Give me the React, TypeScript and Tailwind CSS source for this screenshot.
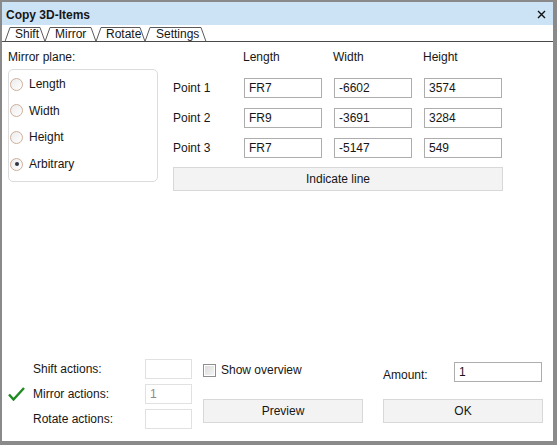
import React from 'react';

const TEXT = 'text-[12px] leading-[14px] text-[#161616]';

function Field({ value, width, muted }: { value: string; width: string; muted?: boolean }) {
  return (
    <div
      className={`${width} h-[20px] border flex items-center pl-[4px] ${
        muted ? 'border-[#e1e1e1] text-[#8a8a8a]' : 'border-[#adadad] text-[#161616]'
      }`}
    >
      {value}
    </div>
  );
}

function Radio({ label, checked }: { label: string; checked?: boolean }) {
  return (
    <div className="flex h-[14px] items-center gap-[6px]">
      <span className="flex h-[13px] w-[13px] items-center justify-center rounded-full border border-[#cfae98] bg-gradient-to-br from-[#ececec] to-white">
        {checked && <span className="h-[4px] w-[4px] rounded-full bg-[#2f3440]" />}
      </span>
      <span>{label}</span>
    </div>
  );
}

function Button({ label, width }: { label: string; width: string }) {
  return (
    <div
      className={`${width} flex h-[24px] items-center justify-center border border-[#d8d8d8] bg-[#f3f3f4]`}
    >
      {label}
    </div>
  );
}

function TabStrip() {
  const tabs = [
    { label: 'Shift', x: 13 },
    { label: 'Mirror', x: 53 },
    { label: 'Rotate', x: 104 },
    { label: 'Settings', x: 154 },
  ];
  return (
    <svg width="551" height="17" className="block">
      <path
        d="M3 16.5 L8 2.5 L38 2.5 L43 16.5 L48 2.5 L89 2.5 L94 16.5 L99 2.5 L138 2.5 L143 16.5 L148 2.5 L199 2.5 L204 16.5"
        fill="none"
        stroke="#5a5a5a"
        strokeWidth="1"
      />
      <line x1="0" y1="16.5" x2="551" y2="16.5" stroke="#4a4a4a" strokeWidth="1" />
      {tabs.map((t) => (
        <text
          key={t.label}
          x={t.x}
          y="13"
          fontSize="12"
          fontFamily="'Liberation Sans', Arial, sans-serif"
          fill="#161616"
        >
          {t.label}
        </text>
      ))}
    </svg>
  );
}

export default function App() {
  const points = [
    { name: 'Point 1', values: ['FR7', '-6602', '3574'] },
    { name: 'Point 2', values: ['FR9', '-3691', '3284'] },
    { name: 'Point 3', values: ['FR7', '-5147', '549'] },
  ];

  return (
    <div
      className={`flex h-[445px] w-[557px] flex-col border-t-2 border-l-2 border-r-4 border-b-4 border-[#8a8a8a] bg-white font-['Liberation_Sans',Arial,sans-serif] ${TEXT}`}
    >
      <div className="flex h-[23px] items-center justify-between bg-[#cce3f6] pl-[4px] pr-[7px] pt-[2px]">
        <span className="text-[12px] font-bold">Copy 3D-Items</span>
        <svg width="9" height="9" viewBox="0 0 9 9">
          <path d="M1 1 L8 8 M8 1 L1 8" stroke="#111" strokeWidth="1.4" />
        </svg>
      </div>

      <TabStrip />

      <div className="flex flex-1 flex-col px-[6px] pt-[8px] pb-[12px]">
        <div className="flex">
          <div className="flex w-[150px] flex-col">
            <div className="h-[14px]">Mirror plane:</div>
            <div className="mt-[5px] flex h-[113px] flex-col gap-[12.7px] rounded-[5px] border border-[#dcdcdc] pl-[1px] pt-[7px]">
              <Radio label="Length" />
              <Radio label="Width" />
              <Radio label="Height" />
              <Radio label="Arbitrary" checked />
            </div>
          </div>

          <div className="ml-[15px] flex flex-col">
            <div className="grid h-[14px] grid-cols-[58px_78px_78px_78px] gap-x-[12px]">
              <span />
              <span>Length</span>
              <span>Width</span>
              <span>Height</span>
            </div>
            <div className="mt-[14px] flex flex-col gap-[10px]">
              {points.map((p) => (
                <div
                  key={p.name}
                  className="grid grid-cols-[59px_78px_78px_78px] items-center gap-x-[12px]"
                >
                  <span>{p.name}</span>
                  {p.values.map((v, i) => (
                    <Field key={i} value={v} width="w-[78px]" />
                  ))}
                </div>
              ))}
            </div>
            <div className="mt-[9px]">
              <Button label="Indicate line" width="w-[330px]" />
            </div>
          </div>
        </div>

        <div className="mt-auto flex">
          <div className="grid grid-cols-[25px_112px_47px] grid-rows-[20px_20px_20px] items-center gap-y-[5px]">
            <span />
            <span>Shift actions:</span>
            <Field value="" width="w-[47px]" muted />
            <svg width="17" height="14" viewBox="0 0 17 14">
              <path d="M1 7.5 L5.5 12.5 L16 1" fill="none" stroke="#1d8a22" strokeWidth="2.4" />
            </svg>
            <span>Mirror actions:</span>
            <Field value="1" width="w-[47px]" muted />
            <span />
            <span>Rotate actions:</span>
            <Field value="" width="w-[47px]" muted />
          </div>

          <div className="ml-[11px] flex w-[160px] flex-col">
            <div className="flex h-[22px] items-center gap-[5px]">
              <span className="flex h-[13px] w-[13px] items-center justify-center border border-[#8f8f8f] bg-white">
                <span className="h-[9px] w-[9px] bg-gradient-to-br from-[#dcdcdc] to-[#f4f4f4]" />
              </span>
              <span>Show overview</span>
            </div>
            <div className="mt-[18px]">
              <Button label="Preview" width="w-[160px]" />
            </div>
          </div>

          <div className="ml-[20px] flex w-[160px] flex-col">
            <div className="flex h-[23px] items-start">
              <span className="mt-[9px] w-[71px]">Amount:</span>
              <div className="mt-[3px]">
                <Field value="1" width="w-[88px]" />
              </div>
            </div>
            <div className="mt-[17px]">
              <Button label="OK" width="w-[160px]" />
            </div>
          </div>
        </div>
      </div>
    </div>
  );
}
